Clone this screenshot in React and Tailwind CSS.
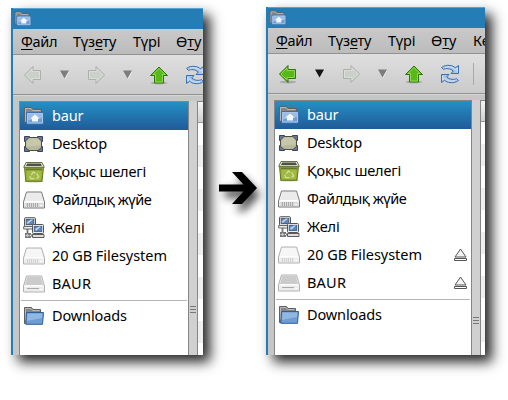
import React from "react";

function HomeFolder({ className }) {
  return (
    <svg className={className} viewBox="0 0 22 22">
      <path d="M1.500 17.500V2.500h7l1.500 2h8.500v13z" fill="#858585" stroke="#606060" />
      <path d="M2.500 3.500h5.500l1.500 2h8M2.500 3.500v13" fill="none" stroke="#b8b8b8" />
      <path d="M3.500 7.500h17v11.500h-17z" fill="#6f9fd6" stroke="#3a6faf" />
      <path d="M4.500 8.500h15V13l-15 2.500z" fill="#a5c5ea" opacity=".75" />
      <path d="M4.500 8.500h15v9.500h-15z" fill="none" stroke="#a9c6e8" />
      <path d="M12 9.500l4.700 4h-1.700v3H9v-3H7.300z" fill="#f4f8fc" />
    </svg>
  );
}

function BlueFolder() {
  return (
    <svg className="h-[22px] w-[22px]" viewBox="0 0 22 22">
      <path d="M1.500 18.500V2.500h7l1.500 2h7.500v14z" fill="#858585" stroke="#606060" />
      <path d="M2.500 3.500h5.500l1.500 2h7M2.500 3.500v12" fill="none" stroke="#b9b9b9" />
      <path d="M3.500 7.500h17l-1 11.800H2.800z" fill="#6e9dd1" stroke="#2d5f9f" />
      <path d="M4.500 8.500h14.900l-.4 4.500L4 16z" fill="#9fc0e6" opacity=".75" />
    </svg>
  );
}

function DesktopIcon() {
  return (
    <svg className="h-[22px] w-[22px]" viewBox="0 0 22 22">
      <path d="M1.500 3.500h5v5h-5zM14.500 3.500h5v5h-5zM1.500 13.500h5v5h-5zM14.500 13.500h5v5h-5z" fill="#68779c" stroke="#39445f" />
      <path d="M6 4.500h9l3.500 3.500v6.500L15 17.500H6L2.500 14.500V8z" fill="#b8b99b" stroke="#4c4e42" />
      <path d="M6.500 5.500h8l3 3v4L6 13.500l-2.500.5V8.500z" fill="#d0d0b7" opacity=".6" />
    </svg>
  );
}

function TrashIcon() {
  return (
    <svg className="h-[22px] w-[22px]" viewBox="0 0 22 22">
      <ellipse cx="11" cy="20.500" rx="10" ry="1" fill="#000" opacity=".18" />
      <path d="M1.500 6h19L19 20.300H2.800z" fill="#96ae37" stroke="#63751d" />
      <path d="M3 7.500h16v2H3z" fill="#66792a" />
      <path d="M3.500 9.500h15l-.8 9.500H4.200z" fill="#a2b944" />
      <path d="M3 1.500h16l2.300 4.800H.7z" fill="#e4e8d4" stroke="#66733c" />
      <path d="M4.300 2.500h13.400l1.200 2.400H3z" fill="#4f504b" />
      <path d="M8.300 14l2-3 2 1.500M13.700 12.500l2 3.300-2 1.700M11.500 17.700H7.700L6.800 15" fill="none" stroke="#d2dd98" strokeWidth="1.300" />
    </svg>
  );
}

function DriveIcon({ tone }) {
  const edge = tone === "strong" ? "#777" : "#b0b0b0";
  const removable = tone === "removable";
  return (
    <svg className="h-[22px] w-[22px]" viewBox="0 0 22 22">
      <path d="M3.500 3h15L21.500 13v6H.5v-6z" fill="#f3f3f3" stroke={edge} strokeLinejoin="round" />
      <path d="M4.200 4h13.600l2.400 8.500H1.800z" fill={removable ? "#cbcbcb" : tone === "strong" ? "#ebebeb" : "#f6f6f6"} />
      <path d="M1.500 13.500l1.500-1h16l1.500 1" fill="none" stroke="#fff" />
      <path d="M1.500 14h19v4h-19z" fill={tone === "strong" ? "#dadada" : "#ececec"} />
      {removable ? (
        <path d="M4 15.500h12" stroke="#aaa" />
      ) : (
        <path d="M4.500 14v4M6.500 14v4M8.500 14v4M10.500 14v4M12.500 14v4M14.500 14v4" stroke={tone === "strong" ? "#aaa" : "#d2d2d2"} />
      )}
      <path d="M17 16.500h2" stroke="#fff" />
    </svg>
  );
}

function NetworkIcon() {
  return (
    <svg className="h-[22px] w-[22px]" viewBox="0 0 22 22">
      <path d="M4.500 11v7M2 17h6M2 20h6M8 18.500h5" fill="none" stroke="#777" strokeWidth="1.800" />
      <rect x="1.500" y=".7" width="11" height="9" rx="1" fill="#e0e0dc" stroke="#555" />
      <rect x="3.300" y="2.500" width="7.400" height="5" fill="#5f86b9" stroke="#486184" />
      <path d="M3.500 5.500l4-3h2.800l-5.700 4.700z" fill="#b8cae1" />
      <path d="M.7 9.500h11v2.500H.7z" fill="#eee" stroke="#666" />
      <rect x="9.500" y="7.500" width="11" height="9" rx="1" fill="#eee" stroke="#555" />
      <rect x="11.300" y="9.400" width="7.400" height="5" fill="#5b87c5" stroke="#446490" />
      <path d="M12 12l4-2.500h2l-5 4.600z" fill="#c0d2ed" />
      <path d="M9.500 17.500h11.500v3H9.500z" fill="#ddd" stroke="#5d5d5d" />
      <circle cx="4.500" cy="18.500" r="1.800" fill="#ccc" stroke="#777" />
    </svg>
  );
}

function ArrowIcon({ direction, disabled }) {
  const shapes = {
    left: ["M1.500 10L10 1.500v4h7.500v9H10v4z", "M3 10l6-6v2.500h7.500v7H9V16z"],
    right: ["M18.500 10L10 1.500v4H2.500v9H10v4z", "M17 10l-6-6v2.500H3.500v7H11V16z"],
    up: ["M10 2l8.500 8.500h-4V18h-9v-7.500h-4z", "M10 3.500l6 6h-2.500V17h-7V9.500H4z"],
  };
  const [outline, inner] = shapes[direction];
  return (
    <svg className="h-5 w-5 shrink-0" viewBox="0 0 20 20">
      {!disabled && <ellipse cx="10" cy="18" rx="8.500" ry="1.500" fill="#000" opacity=".18" />}
      <path d={outline} fill={disabled ? "#cdcfcb" : "#58b818"} stroke={disabled ? "#acb0aa" : "#2f7607"} />
      <path d={inner} fill="none" stroke={disabled ? "#dadcd9" : "#8fd75a"} />
    </svg>
  );
}

function Caret({ dark }) {
  return (
    <svg className="h-[9px] w-[9px] shrink-0" viewBox="0 0 9 9">
      {!dark && <path d="M9 1L5 8.500" stroke="#f8f8f8" />}
      <path d="M0 .5h9L4.500 8.500z" fill={dark ? "#151515" : "#7d7d7d"} />
    </svg>
  );
}

function RefreshIcon() {
  return (
    <svg className="h-5 w-5 shrink-0" viewBox="0 0 20 20">
      <g fill="#a9c4e6" stroke="#3a6fb2" strokeLinejoin="round">
        <path d="M1.500 3.500C4 1.500 7 1 10 1.500c2.500.2 4 1 5.200 2.300L18.500 1.500v8H11L13.300 7C10 4.300 6 4 3.500 5.500z" />
        <path d="M18.500 16.500c-2.500 2-5.500 2.500-8.500 2-2.500-.2-4-1-5.300-2.300L1.500 18.500v-8h7.500L6.700 13c3.300 2.700 7.300 3 9.800 1.500z" />
      </g>
      <path d="M5 3.500c4-1.500 8-.5 10.300 2.200l2-1.500v4M15 16.500c-4 1.500-8 .5-10.300-2.200l-2 1.500v-4" fill="none" stroke="#e4eef9" strokeWidth=".8" />
    </svg>
  );
}

function EjectIcon() {
  return (
    <svg className="h-[14px] w-[13px]" viewBox="0 0 13 14">
      <path d="M6.500 1L12 9H1z" fill="#f3f3f3" stroke="#555" />
      <path d="M.5 10.500h12v2H.5z" fill="#fff" stroke="#555" />
    </svg>
  );
}

const places = [
  { label: "baur", tracking: "tracking-[-0.2px]", icon: <HomeFolder className="h-[22px] w-[22px]" /> },
  { label: "Desktop", tracking: "tracking-[-0.22px]", icon: <DesktopIcon /> },
  { label: "Қоқыс шелегі", tracking: "tracking-[-0.15px]", icon: <TrashIcon /> },
  { label: "Файлдық жүйе", tracking: "tracking-[-0.42px]", icon: <DriveIcon tone="strong" /> },
  { label: "Желі", tracking: "tracking-[-0.1px]", icon: <NetworkIcon /> },
  { label: "20 GB Filesystem", tracking: "tracking-[-0.04px]", icon: <DriveIcon tone="light" />, mounted: true },
  { label: "BAUR", tracking: "tracking-[0.2px]", icon: <DriveIcon tone="removable" />, mounted: true },
];

function Place({ item, selected, eject }) {
  return (
    <div className={`flex h-7 shrink-0 items-center pl-[3px] pr-1 ${selected ? "bg-linear-to-b from-[#2490c4] to-[#205b99] text-white" : ""}`}>
      {item.icon}
      <span className={`mb-[2px] ml-[7px] whitespace-nowrap ${item.tracking}`}>{item.label}</span>
      {eject && <span className="ml-auto"><EjectIcon /></span>}
    </div>
  );
}

function Mnemonic({ children }) {
  return <span className="underline decoration-1 underline-offset-[2px]">{children}</span>;
}

function FileWindow({ after }) {
  return (
    <section className={`flex shrink-0 flex-col overflow-hidden border-l-2 border-[#247eb5] bg-[#c6c6c6] shadow-[7px_7px_12px_rgba(0,0,0,0.85)] ${after ? "mt-[7px] h-[348px] w-[219px]" : "mt-2 h-[347px] w-48"}`}>
      <header className="flex h-[21px] shrink-0 items-start border-t border-[#5ba3cf] bg-[#247eb5] pl-px pt-px">
        <HomeFolder className="h-[18px] w-[18px]" />
      </header>
      <nav className="flex h-[26px] shrink-0 items-center overflow-hidden whitespace-nowrap border-b border-[#929292] bg-linear-to-b from-[#c9c9c9] to-[#bcbcbc] pb-[2px] pl-2">
        <span className="w-[52px] shrink-0 tracking-[-0.3px]"><Mnemonic>Ф</Mnemonic>айл</span>
        <span className="w-[60px] shrink-0 tracking-[-0.2px]">Түз<Mnemonic>е</Mnemonic>ту</span>
        <span className="w-[43px] shrink-0 tracking-[-0.2px]">Түрі</span>
        <span className="w-[42px] shrink-0">Ө<Mnemonic>т</Mnemonic>у</span>
        {after && <span className="shrink-0">Ке</span>}
      </nav>
      <div className="flex h-10 shrink-0 items-center border-b border-[#929292] bg-linear-to-b from-[#dfdfdf] to-[#cacaca] pl-[10px]">
        <ArrowIcon direction="left" disabled={!after} />
        <span className="ml-[17px] flex shrink-0"><Caret dark={after} /></span>
        <span className="ml-[17px] flex shrink-0"><ArrowIcon direction="right" disabled /></span>
        <span className="ml-[17px] flex shrink-0"><Caret /></span>
        <span className="ml-[17px] flex shrink-0"><ArrowIcon direction="up" /></span>
        <span className="ml-4 flex shrink-0"><RefreshIcon /></span>
        {after && <span className="ml-[13px] h-[22px] w-px shrink-0 bg-[#a9a9a9]" />}
      </div>
      <main className="flex min-h-0 flex-1 border-t border-[#d5d5d5] pl-1.5 pt-[5px]">
        <aside className={`flex shrink-0 flex-col border-x border-t border-[#858585] bg-white ${after ? "w-[198px]" : "w-[170px]"}`}>
          {places.map((item, index) => (
            <Place key={item.label} item={item} selected={index === 0} eject={after && item.mounted} />
          ))}
          <div className="mx-px mb-px mt-[2px] h-px shrink-0 bg-[#b6b6b6]" />
          <Place item={{ label: "Downloads", tracking: "tracking-[-0.12px]", icon: <BlueFolder /> }} />
        </aside>
        <div className={`flex w-2 shrink-0 flex-col items-center gap-[2px] bg-[#d0d0d0] ${after ? "pt-[217px]" : "pt-[205px]"}`}>
          <span className="h-px w-1.5 bg-[#777]" />
          <span className="h-px w-1.5 bg-[#777]" />
          <span className="h-px w-1.5 bg-[#777]" />
        </div>
        <div className="flex flex-1 flex-col border-l border-t border-[#858585] bg-[repeating-linear-gradient(to_bottom,white_0_22px,#efefef_22px_44px)] bg-[position:0_21px]">
          <div className="h-[21px] shrink-0 border-b border-[#999] bg-linear-to-b from-[#f5f5f5] to-[#cfcfcf]" />
          <div className="flex-1 bg-[repeating-linear-gradient(to_bottom,white_0_22px,#efefef_22px_44px)]" />
        </div>
      </main>
    </section>
  );
}

export default function App() {
  return (
    <div className="flex h-[400px] w-[508px] items-start overflow-hidden bg-white pl-[11px] font-['Noto_Sans','Open_Sans',sans-serif] text-[14.500px] leading-5 text-black">
      <FileWindow />
      <div className="relative z-10 mt-[164px] h-[60px] w-[63px] shrink-0">
        <svg className="h-[60px] w-[75px]" viewBox="0 0 75 60">
          <defs><filter id="arrow-shadow" x="-50%" y="-50%" width="200%" height="200%"><feGaussianBlur stdDeviation="4" /></filter></defs>
          <path d="M22 25h19l-7-11h8l15 17-15 16h-9l9-13H22z" fill="#000" opacity=".7" filter="url(#arrow-shadow)" />
          <path d="M16 20.500h24.500L29 8h10l15 16-15 16H29l11.500-12.500H16z" fill="#000" />
        </svg>
      </div>
      <FileWindow after />
    </div>
  );
}
